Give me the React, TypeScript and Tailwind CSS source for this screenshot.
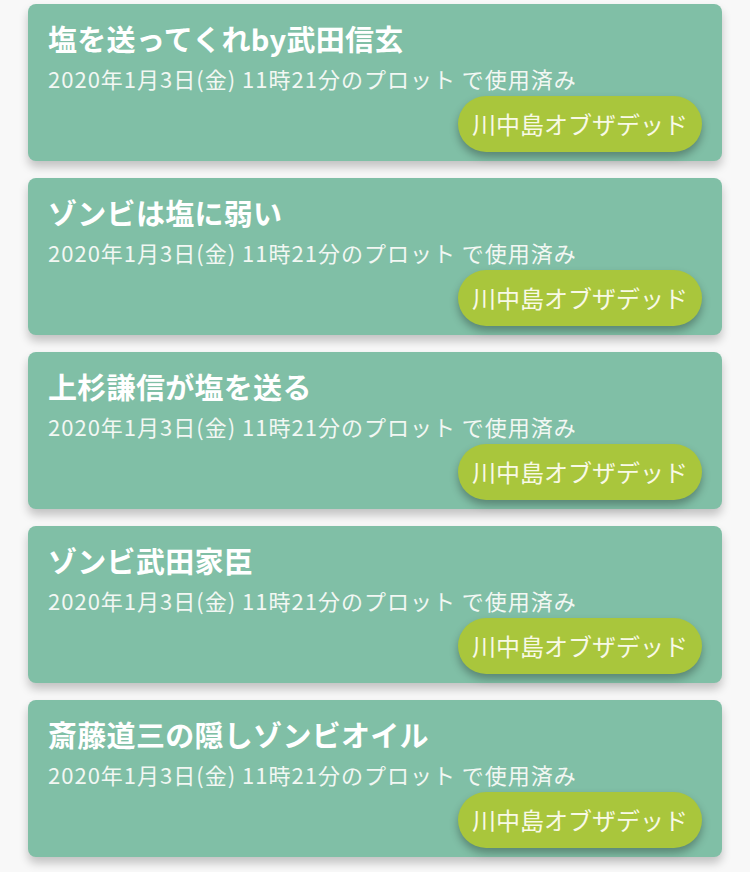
import React from "react";

const items = [
  "塩を送ってくれby武田信玄",
  "ゾンビは塩に弱い",
  "上杉謙信が塩を送る",
  "ゾンビ武田家臣",
  "斎藤道三の隠しゾンビオイル",
];

function PlotCard({ title }: { title: string }) {
  return (
    <div className="flex flex-col rounded-[8px] bg-[#80bfa6] px-[20px] pt-[16px] pb-[9px] shadow-[0_6px_10px_rgba(0,0,0,0.22)]">
      <h2 className="text-[29px] font-bold leading-[36px] tracking-[0.3px] text-white">{title}</h2>
      <p className="mt-[8px] text-[22px] leading-[28px] tracking-[1px] text-[#f2f7f3]">
        2020年1月3日(金) 11時21分のプロット で使用済み
      </p>
      <div className="mt-[4px] flex justify-end">
        <button className="h-[56px] rounded-full bg-[#a9c63c] px-[14px] text-[24px] text-[#f8f9e6] shadow-[0_5px_8px_rgba(0,0,0,0.3)]">
          川中島オブザデッド
        </button>
      </div>
    </div>
  );
}

export default function App() {
  return (
    <div
      className="min-h-[872px] bg-[#f8f8f8] px-[28px] pt-[4px]"
      style={{ fontFamily: '"Noto Sans CJK JP", "Noto Sans", sans-serif' }}
    >
      <div className="flex flex-col gap-[17px]">
        {items.map((t) => (
          <PlotCard key={t} title={t} />
        ))}
      </div>
    </div>
  );
}
